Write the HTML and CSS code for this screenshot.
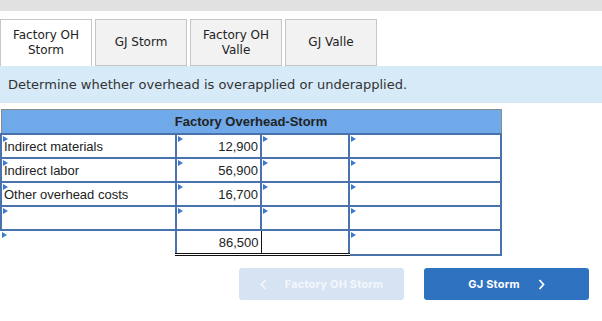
FILE: index.html
```
<!DOCTYPE html>
<html>
<head>
<meta charset="utf-8">
<link rel="stylesheet" href="styles.css">
</head>
<body>
<div class="topbar"></div>
<div class="tabs">
  <div class="tab active">Factory OH<br>Storm</div>
  <div class="tab">GJ Storm</div>
  <div class="tab">Factory OH<br>Valle</div>
  <div class="tab">GJ Valle</div>
</div>
<div class="info">Determine whether overhead is overapplied or underapplied.</div>
<table class="tacct">
  <colgroup>
    <col class="c1"><col class="c2"><col class="c3"><col class="c4">
  </colgroup>
  <thead>
    <tr><th colspan="4">Factory Overhead-Storm</th></tr>
  </thead>
  <tbody>
    <tr>
      <td class="lbl mark">Indirect materials</td>
      <td class="num mark">12,900</td>
      <td class="mid mark"></td>
      <td class="mark"></td>
    </tr>
    <tr>
      <td class="lbl mark">Indirect labor</td>
      <td class="num mark">56,900</td>
      <td class="mid mark"></td>
      <td class="mark"></td>
    </tr>
    <tr>
      <td class="lbl mark">Other overhead costs</td>
      <td class="num mark">16,700</td>
      <td class="mid mark"></td>
      <td class="mark"></td>
    </tr>
    <tr>
      <td class="lbl mark"></td>
      <td class="num mark"></td>
      <td class="mid mark"></td>
      <td class="mark"></td>
    </tr>
    <tr class="total">
      <td class="lbl mark plain"></td>
      <td class="num tot">86,500</td>
      <td class="tot"></td>
      <td class="mark last"></td>
    </tr>
  </tbody>
</table>
<div class="nav">
  <button class="btn prev"><svg width="7" height="11" viewBox="0 0 7 11"><path d="M5.5 1 L1.5 5.5 L5.5 10" fill="none" stroke="currentColor" stroke-width="1.8"/></svg><span>Factory OH Storm</span></button>
  <button class="btn next"><span>GJ Storm</span><svg width="7" height="11" viewBox="0 0 7 11"><path d="M1.5 1 L5.5 5.5 L1.5 10" fill="none" stroke="currentColor" stroke-width="1.8"/></svg></button>
</div>
</body>
</html>
```
FILE: styles.css
```
html, body {
  margin: 0;
  padding: 0;
  background: #fff;
}
body {
  width: 602px;
  font-family: "Liberation Sans", Arial, sans-serif;
}
.topbar {
  height: 11px;
  background: #e1e1e1;
  margin-bottom: 8px;
}
.tabs {
  display: flex;
  gap: 3px;
  height: 47px;
}
.tab {
  box-sizing: border-box;
  width: 92px;
  height: 47px;
  border: 1px solid #c6c6c6;
  background: #f2f2f2;
  display: flex;
  align-items: center;
  justify-content: center;
  text-align: center;
  font-family: "DejaVu Sans", Verdana, sans-serif;
  font-size: 12px;
  line-height: 15px;
  color: #222;
}
.tab.active {
  background: #fff;
  border-bottom: none;
}
.info {
  height: 37px;
  background: #d6eaf8;
  display: flex;
  align-items: center;
  padding-left: 8px;
  font-family: "DejaVu Sans", Verdana, sans-serif;
  font-size: 13px;
  color: #333;
  margin-bottom: 6px;
}
.tacct {
  width: 500px;
  border-collapse: collapse;
  table-layout: fixed;
  font-size: 13px;
  color: #222;
}
.c1 { width: 175px; }
.c2 { width: 85px; }
.c3 { width: 88px; }
.c4 { width: 152px; }
.tacct th {
  height: 23px;
  background: #6fa9e9;
  border: 1px solid #8a8a8a;
  border-bottom: 1px solid #1e2b45;
  font-weight: bold;
  font-size: 13px;
  color: #222;
  padding: 0;
}
.tacct td {
  height: 22px;
  border: 2px solid #4a72ad;
  padding: 0 2px;
  position: relative;
}
.tacct td.lbl {
  padding-left: 2px;
}
.tacct td.num {
  text-align: right;
}
.tacct td.mid {
  border-left: 2px solid #1b2640;
}
.mark::before {
  content: "";
  position: absolute;
  left: 1px;
  top: 1px;
  border-left: 5px solid #3d7bd0;
  border-top: 3px solid transparent;
  border-bottom: 3px solid transparent;
}
.tacct tr.total td {
  height: 22px;
}
.tacct tr.total td.plain {
  border-right: 2px solid #4a72ad;
  border-bottom: none;
  border-left: none;
}
.tacct tr.total td.tot {
  border: 1px solid #111;
  border-bottom: 3px double #111;
}
.tacct tr.total td.last {
  border: 2px solid #4a72ad;
}
.nav {
  display: flex;
  justify-content: flex-end;
  gap: 20px;
  padding-right: 13px;
  margin-top: 12px;
}
.btn {
  width: 165px;
  height: 32px;
  border: none;
  border-radius: 3px;
  display: flex;
  align-items: center;
  justify-content: center;
  gap: 18px;
  font-family: Inter, "Open Sans", sans-serif;
  font-weight: 700;
  font-size: 11px;
  letter-spacing: 0.2px;
  padding: 0;
}
.btn.prev {
  background: #d6e3f3;
  color: #f3f7fc;
}
.btn.next {
  background: #2f72c0;
  color: #fff;
}
```
